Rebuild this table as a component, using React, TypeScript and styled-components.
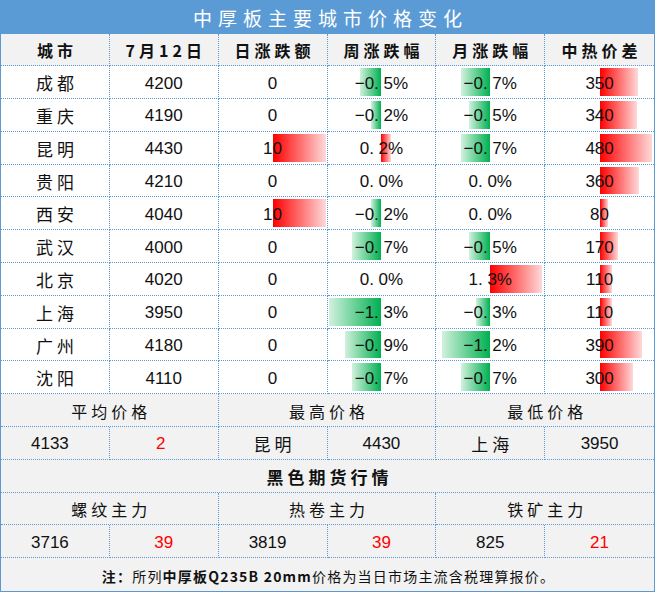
import React from "react";
import styled, { createGlobalStyle, css } from "styled-components";

const BLUE = "#5B9BD5";
const GRAY = "#F2F2F2";
const CJK = `KaiTi, STKaiti, "AR PL UKai CN", "Noto Sans CJK SC", sans-serif`;
const NUM = `"Liberation Sans", Arial, "Noto Sans CJK SC", sans-serif`;

const GlobalStyle = createGlobalStyle`
  html, body { margin: 0; padding: 0; background: #ffffff; }
  * { box-sizing: border-box; }
`;

const Sheet = styled.div`
  width: 655px;
  height: 592px;
  border: 1px solid ${BLUE};
  display: grid;
  grid-template-columns: repeat(6, 1fr);
  grid-template-rows: 32.5px repeat(17, 1fr);
  background: #ffffff;
  overflow: hidden;
`;

const Title = styled.div`
  grid-column: 1 / -1;
  background: ${BLUE};
  color: #ffffff;
  display: flex;
  align-items: center;
  justify-content: center;
  font-family: ${CJK};
  font-size: 19px;
  letter-spacing: 6px;
  padding-left: 6px;
  padding-top: 1px;
`;

type CellProps = {
  $span?: number;
  $gray?: boolean;
  $last?: boolean;
  $noBottom?: boolean;
};

const Cell = styled.div<CellProps>`
  position: relative;
  grid-column: span ${(p) => p.$span ?? 1};
  background: ${(p) => (p.$gray ? GRAY : "#ffffff")};
  border-right: ${(p) => (p.$last ? "none" : `1px dotted ${BLUE}`)};
  border-bottom: ${(p) => (p.$noBottom ? "none" : `1px dotted ${BLUE}`)};
  display: flex;
  align-items: center;
  justify-content: center;
  min-width: 0;
`;

const CnText = styled.span<{ $bold?: boolean; $size?: number; $space?: number }>`
  font-family: ${CJK};
  font-size: ${(p) => p.$size ?? 16}px;
  font-weight: ${(p) => (p.$bold ? 700 : 400)};
  letter-spacing: ${(p) => p.$space ?? 4}px;
  padding-left: ${(p) => p.$space ?? 4}px;
  color: #111111;
  white-space: nowrap;
  padding-top: 1px;
`;

const Num = styled.span<{ $red?: boolean; $shift?: number }>`
  position: relative;
  z-index: 1;
  font-family: ${NUM};
  font-size: 17px;
  color: ${(p) => (p.$red ? "#FF0000" : "#111111")};
  white-space: pre;
  padding-top: 3px;
  ${(p) =>
    p.$shift
      ? css`
          margin-right: ${p.$shift * 2}px;
        `
      : ""}
`;

const Bar = styled.div<{ $neg?: boolean }>`
  position: absolute;
  top: 2px;
  bottom: 2px;
  ${(p) =>
    p.$neg
      ? css`
          right: 50%;
          background: linear-gradient(to left, #00b050 0%, #d2f1de 100%);
        `
      : css`
          left: 50%;
          background: linear-gradient(to right, #ff0000 0%, #ffd9d9 100%);
        `}
`;

const Footer = styled.div`
  grid-column: 1 / -1;
  background: ${GRAY};
  display: flex;
  align-items: center;
  justify-content: center;
  font-family: ${CJK};
  font-size: 14px;
  letter-spacing: 1.2px;
  color: #111111;
  white-space: nowrap;
  padding-top: 2px;
  padding-left: 2px;
`;

const Strong = styled.b`
  font-weight: 700;
`;

type Row = [string, number, number, number, number, number];

const rows: Row[] = [
  ["成都", 4200, 0, -0.5, -0.7, 350],
  ["重庆", 4190, 0, -0.2, -0.5, 340],
  ["昆明", 4430, 10, 0.2, -0.7, 480],
  ["贵阳", 4210, 0, 0.0, 0.0, 360],
  ["西安", 4040, 10, -0.2, 0.0, 80],
  ["武汉", 4000, 0, -0.7, -0.5, 170],
  ["北京", 4020, 0, 0.0, 1.3, 110],
  ["上海", 3950, 0, -1.3, -0.3, 110],
  ["广州", 4180, 0, -0.9, -1.2, 390],
  ["沈阳", 4110, 0, -0.7, -0.7, 300],
];

const headers = ["城市", "7月12日", "日涨跌额", "周涨跌幅", "月涨跌幅", "中热价差"];

const fmtPct = (v: number) => {
  const s = Math.abs(v).toFixed(1).replace(".", ". ");
  return (v < 0 ? "\u2212" : "") + s + "%";
};

const pctWidth = (v: number) => (v === 0 ? 0 : 2.4 + 38.2 * Math.abs(v));

const BarCell: React.FC<{ value: number; width: number; label: string; last?: boolean }> = ({
  value,
  width,
  label,
  last,
}) => (
  <Cell $last={last}>
    {width > 0 && <Bar $neg={value < 0} style={{ width: `${width}px` }} />}
    <Num>{label}</Num>
  </Cell>
);

export default function App() {
  return (
    <>
      <GlobalStyle />
      <Sheet>
        <Title>中厚板主要城市价格变化</Title>
        {headers.map((h, i) => (
          <Cell key={h} $gray $last={i === 5}>
            <CnText $bold>{h}</CnText>
          </Cell>
        ))}
        {rows.map(([city, price, day, week, month, spread]) => (
          <React.Fragment key={city}>
            <Cell>
              <CnText $size={17}>{city}</CnText>
            </Cell>
            <Cell>
              <Num>{price}</Num>
            </Cell>
            <BarCell value={day} width={day === 0 ? 0 : 53} label={String(day)} />
            <BarCell value={week} width={pctWidth(week)} label={fmtPct(week)} />
            <BarCell value={month} width={pctWidth(month)} label={fmtPct(month)} />
            <BarCell value={spread} width={spread * 0.11} label={String(spread)} last />
          </React.Fragment>
        ))}

        <Cell $gray $span={2}>
          <CnText>平均价格</CnText>
        </Cell>
        <Cell $gray $span={2}>
          <CnText>最高价格</CnText>
        </Cell>
        <Cell $gray $span={2} $last>
          <CnText>最低价格</CnText>
        </Cell>

        <Cell $gray>
          <Num $shift={5}>4133</Num>
        </Cell>
        <Cell $gray>
          <Num $red $shift={3}>2</Num>
        </Cell>
        <Cell $gray>
          <CnText $size={17}>昆明</CnText>
        </Cell>
        <Cell $gray>
          <Num>4430</Num>
        </Cell>
        <Cell $gray>
          <CnText $size={17}>上海</CnText>
        </Cell>
        <Cell $gray $last>
          <Num>3950</Num>
        </Cell>

        <Cell $gray $span={6} $last>
          <CnText $bold $size={17}>黑色期货行情</CnText>
        </Cell>

        <Cell $gray $span={2}>
          <CnText>螺纹主力</CnText>
        </Cell>
        <Cell $gray $span={2}>
          <CnText>热卷主力</CnText>
        </Cell>
        <Cell $gray $span={2} $last>
          <CnText>铁矿主力</CnText>
        </Cell>

        <Cell $gray>
          <Num $shift={5}>3716</Num>
        </Cell>
        <Cell $gray>
          <Num $red>39</Num>
        </Cell>
        <Cell $gray>
          <Num $shift={5}>3819</Num>
        </Cell>
        <Cell $gray>
          <Num $red>39</Num>
        </Cell>
        <Cell $gray>
          <Num>825</Num>
        </Cell>
        <Cell $gray $last>
          <Num $red>21</Num>
        </Cell>

        <Footer>
          <Strong>注：</Strong>所列<Strong>中厚板Q235B 20mm</Strong>价格为当日市场主流含税理算报价。
        </Footer>
      </Sheet>
    </>
  );
}
